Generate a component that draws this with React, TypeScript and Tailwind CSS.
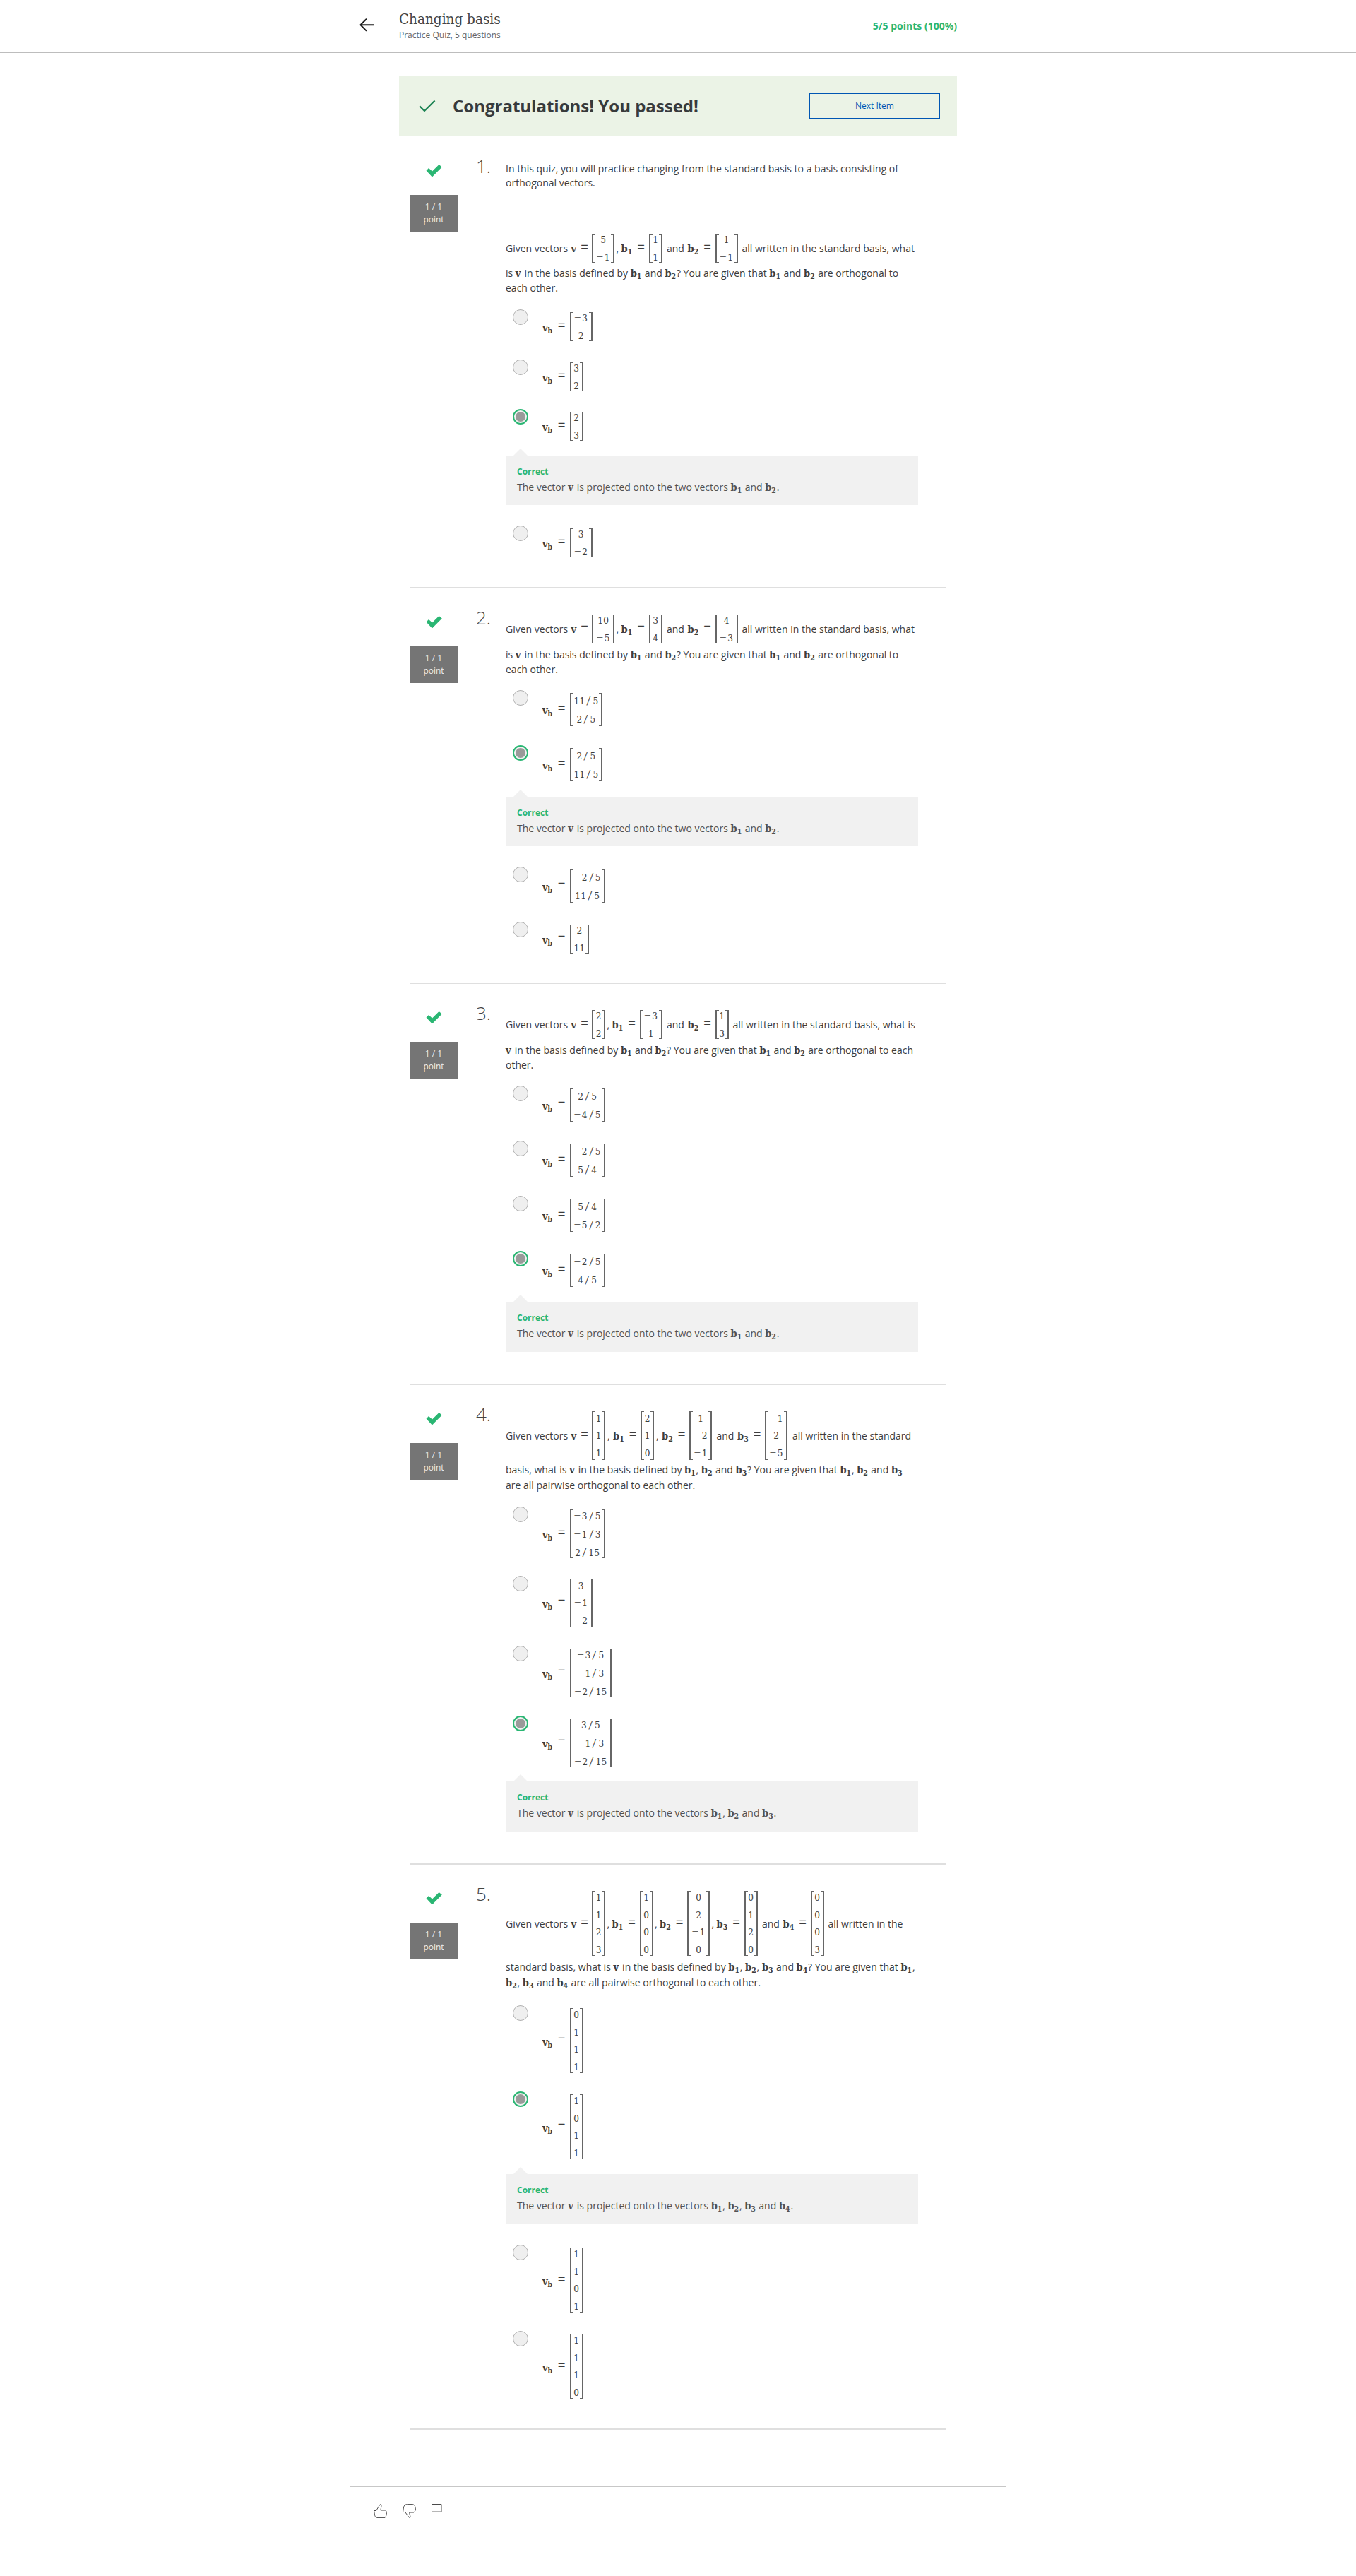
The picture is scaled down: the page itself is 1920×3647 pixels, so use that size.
import React from "react";

/* Bold vector name with an optional subscript. */
function Sym({ name, sub, className = "" }: { name: string; sub?: string; className?: string }) {
  return (
    <span
      className={`inline-block font-['DejaVu_Serif_Condensed','DejaVu_Serif',serif] leading-none font-bold whitespace-pre [font-stretch:condensed] ${className}`}
    >
      <span className="text-[14.5px]">{name}</span>
      {sub && <span className="relative top-[3px] text-[10.5px]">{sub}</span>}
    </span>
  );
}

function Eq() {
  return (
    <span className="relative -top-px inline-block w-[10px] font-['Liberation_Serif',serif] text-[18px] leading-none [-webkit-text-stroke:0.3px_#3d3d3d]">
      =
    </span>
  );
}

function Entry({ value }: { value: string }) {
  return (
    <span className="flex justify-center">
      {value.split("").map((c, i) => {
        if (c === "/")
          return (
            <span key={i} className="flex w-[11px] justify-center">
              <span className="inline-block -skew-x-6 text-[15px]">/</span>
            </span>
          );
        if (c === "-")
          return (
            <span key={i} className="w-[11px] font-['Liberation_Serif',serif] text-[17px]">
              −
            </span>
          );
        return (
          <span key={i} className="flex w-[8px] justify-center">
            {c}
          </span>
        );
      })}
    </span>
  );
}

/* Column vector in square brackets. Rows are comma separated. */
function Matrix({ rows }: { rows: string }) {
  const list = rows.split(",");
  const frac = rows.includes("/");
  const n = list.length;
  const height = n === 4 ? "h-[92px]" : n === 3 ? "h-[69px]" : frac ? "h-[47px]" : "h-[41px]";
  const lead = frac ? "leading-[26px]" : "leading-[24.5px]";
  const units = Math.max(...list.map((r) => r.split("").reduce((a, c) => a + (c === "/" || c === "-" ? 11 : 8), 0)));
  const width =
    units === 8
      ? "w-[19px]"
      : units === 16
        ? "w-[27.5px]"
        : units === 19
          ? "w-[32px]"
          : units === 35
            ? "w-[46.5px]"
            : units === 38
              ? "w-[50px]"
              : "w-[59.5px]";
  return (
    <span className={`flex shrink-0 justify-between ${height} ${width}`}>
      <span className="w-[5px] shrink-0 border-y border-l-2 border-[#666]" />
      <span
        className={`flex w-0 flex-col items-center justify-center font-['DejaVu_Serif_Condensed','DejaVu_Serif',serif] text-[13.5px] [font-stretch:condensed] ${lead}`}
      >
        {list.map((r, i) => (
          <Entry key={i} value={r} />
        ))}
      </span>
      <span className="w-[5px] shrink-0 border-y border-r-2 border-[#666]" />
    </span>
  );
}

/* Prose in which {v}, {b1}… stand for vector names. */
function Rich({ text }: { text: string }) {
  return (
    <>
      {text.split(/(\{\w+\})/).map((part, i) => {
        if (part === "{v}") return <Sym key={i} name="v" className="w-[9px]" />;
        if (part.startsWith("{")) return <Sym key={i} name="b" sub={part[2]} className="w-[16.5px]" />;
        return <React.Fragment key={i}>{part}</React.Fragment>;
      })}
    </>
  );
}

type Vec = { rows: string; sub?: string; then: "comma" | "and" | "end" };

function VectorLine({ vecs, tail }: { vecs: Vec[]; tail: string }) {
  const tall = vecs[0].rows.split(",").length === 3;
  return (
    <div className="flex items-center whitespace-pre">
      <span className="w-[92.5px]">Given vectors</span>
      {vecs.map((v, i) => (
        <React.Fragment key={i}>
          {v.sub ? (
            <span className="w-[39px] shrink-0">
              <Sym name="b" sub={v.sub} className="w-[23px]" />
              <Eq />
            </span>
          ) : (
            <span className="w-[29.5px] shrink-0">
              <Sym name="v" className="w-[14px]" />
              <Eq />
            </span>
          )}
          <Matrix rows={v.rows} />
          {v.then === "comma" && <span className={tall ? "w-[11px] shrink-0 pl-[3px]" : "w-[9.5px] shrink-0 pl-[2.5px]"}>,</span>}
          {v.then === "and" && <span className="w-[36px] shrink-0 pl-[6.5px]">and</span>}
          {v.then === "end" && <span className={tall ? "pl-[7px]" : "pl-[6px]"}>{tail}</span>}
        </React.Fragment>
      ))}
    </div>
  );
}

function Radio({ checked }: { checked?: boolean }) {
  if (checked)
    return (
      <span className="flex size-[22px] shrink-0 items-center justify-center rounded-full border-2 border-[#2ab673] bg-[#f2f2f2]">
        <span className="size-[14px] rounded-full bg-[#9a9a9a]" />
      </span>
    );
  return <span className="size-[22px] shrink-0 rounded-full border border-[#afafaf] bg-[#efefef]" />;
}

function Option({ rows, checked, h }: { rows: string; checked?: boolean; h: string }) {
  return (
    <div className={`flex items-start pl-[10px] ${h}`}>
      <Radio checked={checked} />
      <div className="flex items-center pt-1 pl-[20px]">
        <span className="w-[38.5px] whitespace-pre">
          <span className="relative top-px">
            <Sym name="v" sub="b" className="w-[22px]" />
          </span>
          <Eq />
        </span>
        <Matrix rows={rows} />
      </div>
    </div>
  );
}

function Feedback({ text, h }: { text: string; h: string }) {
  return (
    <div className={`relative w-[584px] bg-[#f1f1f1] pt-[14px] pl-4 text-[#525252] ${h}`}>
      <svg className="absolute -top-[10px] left-[11px]" width="20" height="10" viewBox="0 0 20 10">
        <path d="M0 10 10 0l10 10z" fill="#f1f1f1" />
      </svg>
      <div className="h-[18px] text-xs leading-[18px] font-bold text-[#2ab673]">Correct</div>
      <div className="mt-[2px] h-[22px] leading-[22px] whitespace-pre">
        <Rich text={text} />
      </div>
    </div>
  );
}

function Question({ n, h, children }: { n: number; h: string; children: React.ReactNode }) {
  return (
    <section className={`mx-auto flex w-[760px] border-b-2 border-[#dfdfdf] ${h}`}>
      <div className="w-[68px] pt-[39px]">
        <svg className="mx-auto h-[17px] w-[23px]" viewBox="0 0 23 17">
          <path d="M0.5 8.5 4 5l5 4.6L18.6 0 22.8 3.4 9.4 17h-1z" fill="#2ab673" />
        </svg>
        <div className="mt-[26px] flex h-[52px] flex-col items-center justify-center bg-[#757575] text-xs leading-[18px] text-[#ececec]">
          <span>1 / 1</span>
          <span>point</span>
        </div>
      </div>
      <div className="w-[68px] pt-[23px] pl-[26px] text-[26px] leading-[36px] font-light text-[#454545]">{n}.</div>
      <div className="w-[624px]">{children}</div>
    </section>
  );
}

export default function App() {
  return (
    <div className="h-[3647px] w-[1920px] bg-white font-['Open_Sans',sans-serif] text-[14px] text-[#3d3d3d]">
      <header className="h-[75px] border-b border-[#bdbdbd]">
        <div className="mx-auto flex w-[900px] items-start pt-[12px]">
          <svg className="mt-[14px] -ml-px w-[20px] shrink-0" height="19" viewBox="0 0 20 19" fill="none" stroke="#1f1f1f" strokeWidth="2">
            <path d="M20 9.3H1M10 .8 1.4 9.3 10 17.9" />
          </svg>
          <div className="w-[601px] pl-[36px]">
            <h1 className="h-[31px] font-['DejaVu_Serif_Condensed','DejaVu_Serif',serif] text-[20.5px] leading-[31px] text-[#454545] [font-stretch:condensed]">
              Changing basis
            </h1>
            <p className="h-[18px] text-xs leading-[14px] text-[#666]">Practice Quiz, 5 questions</p>
          </div>
          <div className="w-[225px] pt-[14px] text-right leading-[22px] font-bold text-[#2ab673]">5/5 points (100%)</div>
        </div>
      </header>

      <div className="mx-auto mt-[33px] mb-[2px] flex h-[84px] w-[790px] items-center bg-[#ebf3e6] pr-[24px] pl-[28px]">
        <svg width="24" height="18" viewBox="0 0 24 18" fill="none" stroke="#1d8354" strokeWidth="2.2">
          <path d="M1.2 9.2 8 16 22.6 1.5" />
        </svg>
        <h2 className="flex-1 pl-[24px] text-2xl leading-[32px] font-bold text-[#373a3c]">Congratulations! You passed!</h2>
        <button className="h-[36px] w-[185px] border border-[#0056b3] text-xs text-[#0056b3]">Next Item</button>
      </div>

      <Question n={1} h="h-[639px]">
        <p className="pt-[35px] pb-[62px] leading-[20px]">
          In this quiz, you will practice changing from the standard basis to a basis consisting of
          <br />
          orthogonal vectors.
        </p>
        <VectorLine
          vecs={[
            { rows: "5,-1", then: "comma" },
            { rows: "1,1", sub: "1", then: "and" },
            { rows: "1,-1", sub: "2", then: "end" },
          ]}
          tail="all written in the standard basis, what"
        />
        <div className="mt-[4px] mb-[20px] leading-[21px] whitespace-pre">
          <div className="h-[21px]">
            <Rich text="is {v} in the basis defined by {b1} and {b2}? You are given that {b1} and {b2} are orthogonal to" />
          </div>
          <div className="h-[21px]">each other.</div>
        </div>
        <Option rows="-3,2" h="h-[71px]" />
        <Option rows="3,2" h="h-[70px]" />
        <Option rows="2,3" checked h="h-[66px]" />
        <Feedback h="mb-[29px] h-[70px]" text="The vector {v} is projected onto the two vectors {b1} and {b2}." />
        <Option rows="3,-2" h="h-[71px]" />
      </Question>

      <Question n={2} h="h-[560px]">
        <div className="pt-[37px]">
          <VectorLine
            vecs={[
              { rows: "10,-5", then: "comma" },
              { rows: "3,4", sub: "1", then: "and" },
              { rows: "4,-3", sub: "2", then: "end" },
            ]}
            tail="all written in the standard basis, what"
          />
        </div>
        <div className="mt-[5px] mb-[19px] leading-[21px] whitespace-pre">
          <div className="h-[21px]">
            <Rich text="is {v} in the basis defined by {b1} and {b2}? You are given that {b1} and {b2} are orthogonal to" />
          </div>
          <div className="h-[21px]">each other.</div>
        </div>
        <Option rows="11/5,2/5" h="h-[78px]" />
        <Option rows="2/5,11/5" checked h="h-[73px]" />
        <Feedback h="mb-[29px] h-[70px]" text="The vector {v} is projected onto the two vectors {b1} and {b2}." />
        <Option rows="-2/5,11/5" h="h-[78px]" />
        <Option rows="2,11" h="h-[71px]" />
      </Question>

      <Question n={3} h="h-[568px]">
        <div className="pt-[37px]">
          <VectorLine
            vecs={[
              { rows: "2,2", then: "comma" },
              { rows: "-3,1", sub: "1", then: "and" },
              { rows: "1,3", sub: "2", then: "end" },
            ]}
            tail="all written in the standard basis, what is"
          />
        </div>
        <div className="mt-[5px] mb-[19px] leading-[21px] whitespace-pre">
          <div className="h-[21px]">
            <Rich text="{v} in the basis defined by {b1} and {b2}? You are given that {b1} and {b2} are orthogonal to each" />
          </div>
          <div className="h-[21px]">other.</div>
        </div>
        <Option rows="2/5,-4/5" h="h-[78px]" />
        <Option rows="-2/5,5/4" h="h-[78px]" />
        <Option rows="5/4,-5/2" h="h-[78px]" />
        <Option rows="-2/5,4/5" checked h="h-[72px]" />
        <Feedback h="h-[71px]" text="The vector {v} is projected onto the two vectors {b1} and {b2}." />
      </Question>

      <Question n={4} h="h-[679px]">
        <div className="pt-[37px]">
          <VectorLine
            vecs={[
              { rows: "1,1,1", then: "comma" },
              { rows: "2,1,0", sub: "1", then: "comma" },
              { rows: "1,-2,-1", sub: "2", then: "and" },
              { rows: "-1,2,-5", sub: "3", then: "end" },
            ]}
            tail="all written in the standard"
          />
        </div>
        <div className="mt-[3px] mb-[19px] leading-[22px] whitespace-pre">
          <div className="h-[22px]">
            <Rich text="basis, what is {v} in the basis defined by {b1}, {b2} and {b3}? You are given that {b1}, {b2} and {b3}" />
          </div>
          <div className="h-[22px]">are all pairwise orthogonal to each other.</div>
        </div>
        <Option rows="-3/5,-1/3,2/15" h="h-[98px]" />
        <Option rows="3,-1,-2" h="h-[99px]" />
        <Option rows="-3/5,-1/3,-2/15" h="h-[99px]" />
        <Option rows="3/5,-1/3,-2/15" checked h="h-[93px]" />
        <Feedback h="h-[71px]" text="The vector {v} is projected onto the vectors {b1}, {b2} and {b3}." />
      </Question>

      <Question n={5} h="h-[800px]">
        <div className="pt-[37px]">
          <VectorLine
            vecs={[
              { rows: "1,1,2,3", then: "comma" },
              { rows: "1,0,0,0", sub: "1", then: "comma" },
              { rows: "0,2,-1,0", sub: "2", then: "comma" },
              { rows: "0,1,2,0", sub: "3", then: "and" },
              { rows: "0,0,0,3", sub: "4", then: "end" },
            ]}
            tail="all written in the"
          />
        </div>
        <div className="mt-[5px] mb-[21px] leading-[22px] whitespace-pre">
          <div className="h-[22px]">
            <Rich text="standard basis, what is {v} in the basis defined by {b1}, {b2}, {b3} and {b4}? You are given that {b1}," />
          </div>
          <div className="h-[22px]">
            <Rich text="{b2}, {b3} and {b4} are all pairwise orthogonal to each other." />
          </div>
        </div>
        <Option rows="0,1,1,1" h="h-[122px]" />
        <Option rows="1,0,1,1" checked h="h-[117px]" />
        <Feedback h="mb-[29px] h-[71px]" text="The vector {v} is projected onto the vectors {b1}, {b2}, {b3} and {b4}." />
        <Option rows="1,1,0,1" h="h-[122px]" />
        <Option rows="1,1,1,0" h="h-[122px]" />
      </Question>

      <footer className="mx-auto mt-[80px] flex w-[930px] gap-[22px] border-t border-[#c7c7c7] pt-[24px] pl-[34px]">
        <svg width="19" height="20" viewBox="0 0 19 20" fill="none" stroke="#4a4a4a" strokeWidth="1">
          <path d="M.6 9.5h3L8.8 1.2C9.4.3 10.7.8 10.9 2c.3 2-.8 4.500-1 7h6.600c1.200.5 1.900 2 1.900 3.500 0 3-.8 5-1.900 6.500l-1.500.6H4.500C2.500 18.500 1.700 17 1.400 15z" />
        </svg>
        <svg width="19" height="20" viewBox="0 0 19 20" fill="none" stroke="#4a4a4a" strokeWidth="1">
          <path d="M.6 11.500h3l5.900 7.800c.8.5 1.500-.2 1.500-1.400-.2-2-1.300-3-1.200-5.900h6c1.800-1 2.600-3 2.600-5.200C18.200 3.500 16.500.6 14 .6H6.500C3.500.6 1.700 2.500 1.300 6z" />
        </svg>
        <svg width="15" height="20" viewBox="0 0 15 20" fill="none" stroke="#4a4a4a" strokeWidth="1">
          <path d="M.5 20V.5H14v10.600H.5" />
        </svg>
      </footer>
    </div>
  );
}
